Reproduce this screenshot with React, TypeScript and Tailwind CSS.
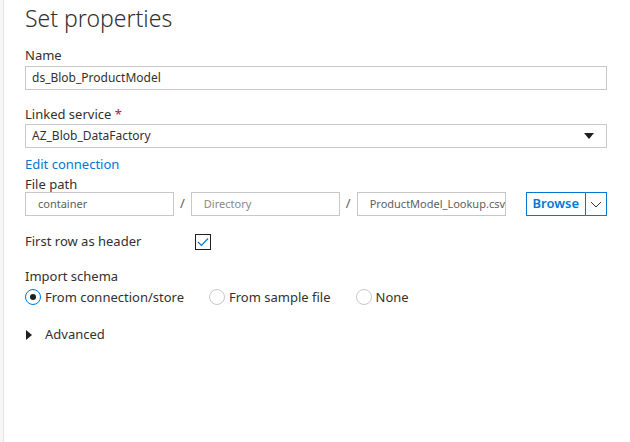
import React from "react";

const font = { fontFamily: '"Noto Sans", "Open Sans", sans-serif' };

const Label = ({ children }: { children: React.ReactNode }) => (
  <div className="text-[13px] leading-[16px] text-[#323130]">{children}</div>
);

const Radio = ({ checked, label }: { checked?: boolean; label: string }) => (
  <label className="flex items-center gap-[4px]">
    <span
      className={
        "w-[16px] h-[16px] rounded-full border flex items-center justify-center bg-white " +
        (checked ? "border-[#0078d4]" : "border-[#c8c8c8]")
      }
    >
      {checked && <span className="w-[6px] h-[6px] rounded-full bg-[#201f1e]" />}
    </span>
    <span className="text-[13px] text-[#323130]">{label}</span>
  </label>
);

export default function App() {
  return (
    <div className="w-[630px] h-[442px] bg-white flex" style={font}>
      <div className="w-[4px] shrink-0 bg-[#f6f6f6] border-r border-[#e3e3e3]" />
      <div className="w-[603px] pl-[21px]">
        <h1 className="text-[23px] font-light text-[#323130] leading-[30px] pt-[3px]">Set properties</h1>

        <div className="mt-[14px]">
          <Label>Name</Label>
          <div className="mt-[3px] h-[24px] border border-[#c8c8c8] px-[6px] flex items-center text-[12px] text-[#323130]">
            ds_Blob_ProductModel
          </div>
        </div>

        <div className="mt-[16px]">
          <Label>
            Linked service <span className="text-[#a4262c]">*</span>
          </Label>
          <div className="mt-[2px] h-[24px] border border-[#c8c8c8] pl-[6px] pr-[12px] flex items-center justify-between text-[12px] text-[#323130]">
            <span>AZ_Blob_DataFactory</span>
            <svg width="10" height="6" viewBox="0 0 10 6">
              <path d="M0 0 L10 0 L5 6 Z" fill="#201f1e" />
            </svg>
          </div>
        </div>

        <div className="mt-[8px] text-[13px] leading-[16px] text-[#0078d4]">Edit connection</div>

        <div className="mt-[4px]">
          <Label>File path</Label>
          <div className="flex items-center">
            <div className="w-[149px] h-[24px] border border-[#c8c8c8] px-[12px] flex items-center text-[11px] text-[#605e5c]">
              container
            </div>
            <span className="w-[17px] text-center text-[13px] text-[#605e5c]">/</span>
            <div className="w-[149px] h-[24px] border border-[#c8c8c8] px-[12px] flex items-center text-[11px] text-[#8a8886]">
              Directory
            </div>
            <span className="w-[17px] text-center text-[13px] text-[#605e5c]">/</span>
            <div className="w-[149px] h-[24px] border border-[#c8c8c8] px-[12px] flex items-center text-[11px] text-[#605e5c] overflow-hidden whitespace-nowrap">
              ProductModel_Lookup.csv
            </div>
            <div className="ml-[20px] h-[24px] flex border border-[#0078d4]">
              <div className="px-[6px] flex items-center text-[13px] font-semibold text-[#0078d4]">Browse</div>
              <div className="w-[21px] border-l border-[#0078d4] flex items-center justify-center">
                <svg width="12" height="7" viewBox="0 0 12 7">
                  <path d="M1 1 L6 6 L11 1" fill="none" stroke="#323130" strokeWidth="1" />
                </svg>
              </div>
            </div>
          </div>
        </div>

        <div className="mt-[16px] flex items-center">
          <div className="w-[170px] text-[13px] text-[#323130]">First row as header</div>
          <div className="w-[16px] h-[16px] border border-[#201f1e] flex items-center justify-center">
            <svg width="12" height="10" viewBox="0 0 12 10">
              <path d="M1 5 L4.5 8.5 L11 1.5" fill="none" stroke="#0078d4" strokeWidth="1.2" />
            </svg>
          </div>
        </div>

        <div className="mt-[16px]">
          <Label>Import schema</Label>
          <div className="mt-[4px] flex items-center gap-[25px]">
            <Radio checked label="From connection/store" />
            <Radio label="From sample file" />
            <Radio label="None" />
          </div>
        </div>

        <div className="mt-[18px] flex items-center">
          <svg width="6" height="10" viewBox="0 0 6 10" className="ml-[1px]">
            <path d="M0 0 L6 5 L0 10 Z" fill="#201f1e" />
          </svg>
          <span className="ml-[13px] text-[13px] text-[#323130]">Advanced</span>
        </div>
      </div>
    </div>
  );
}
